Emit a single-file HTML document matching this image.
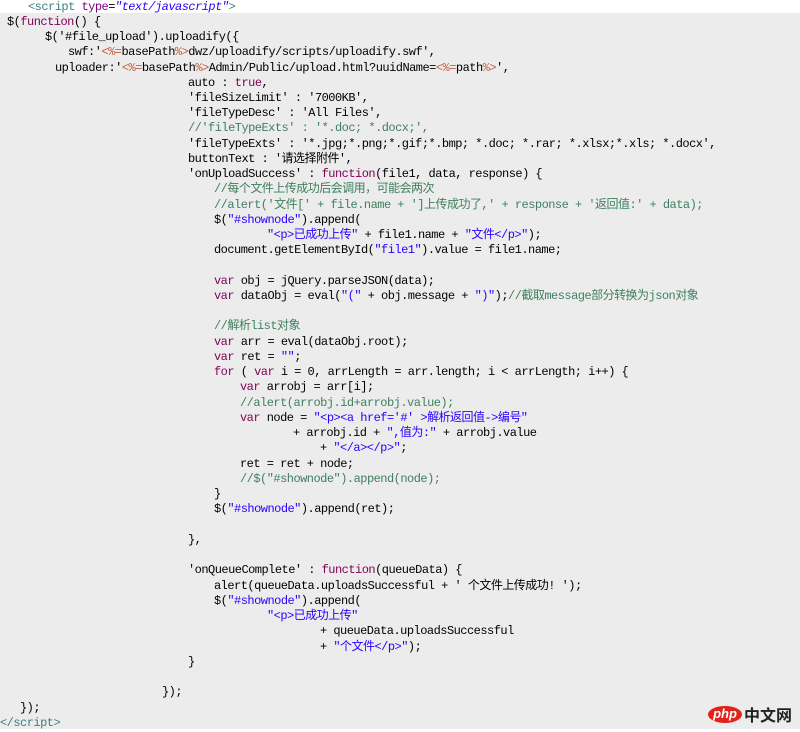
<!DOCTYPE html>
<html><head><meta charset="utf-8"><style>
body{margin:0;width:800px;height:732px;background:#fff;position:relative;overflow:hidden;font-family:"Liberation Mono","Noto Sans CJK SC",monospace;font-size:12px;letter-spacing:-0.52px;color:#000}
.bg{position:absolute;left:0;top:13px;width:800px;height:716px;background:#ececec}
.l{position:absolute;white-space:pre;line-height:15px;height:15px;margin-top:1px}
.k{color:#7f0055}.s{color:#2a00ff}.c{color:#3f7f5f}.j{color:#bf5f3f}.t{color:#3f7f7f}.a{color:#7f007f}.v{color:#2a00ff;font-style:italic}
.logo{position:absolute;left:708px;top:706px;height:18px}
.pe{position:absolute;left:0;top:0;width:34px;height:17px;background:#e2231a;border-radius:50%;color:#fff;font:bold 13px "Liberation Sans",sans-serif;text-align:center;line-height:15px;font-style:italic;letter-spacing:0}
.zh{position:absolute;left:36px;top:-2px;font:bold 16px "Noto Sans CJK SC",sans-serif;color:#222;white-space:nowrap;line-height:20px;letter-spacing:0}
</style></head><body>
<div class="bg"></div>
<div class="l" style="left:28px;top:-1px"><span class="t">&lt;script</span> <span class="a">type</span>=<span class="v">"text/javascript"</span><span class="t">&gt;</span></div>
<div class="l" style="left:7px;top:14px">$(<span class="k">function</span>() {</div>
<div class="l" style="left:45px;top:29px">$('#file_upload').uploadify({</div>
<div class="l" style="left:68px;top:44px">swf:'<span class="j">&lt;%=</span>basePath<span class="j">%&gt;</span>dwz/uploadify/scripts/uploadify.swf',</div>
<div class="l" style="left:55px;top:60px">uploader:'<span class="j">&lt;%=</span>basePath<span class="j">%&gt;</span>Admin/Public/upload.html?uuidName=<span class="j">&lt;%=</span>path<span class="j">%&gt;</span>',</div>
<div class="l" style="left:188px;top:75px">auto : <span class="k">true</span>,</div>
<div class="l" style="left:188px;top:90px">'fileSizeLimit' : '7000KB',</div>
<div class="l" style="left:188px;top:105px">'fileTypeDesc' : 'All Files',</div>
<div class="l c" style="left:188px;top:120px">//'fileTypeExts' : '*.doc; *.docx;',</div>
<div class="l" style="left:188px;top:136px">'fileTypeExts' : '*.jpg;*.png;*.gif;*.bmp; *.doc; *.rar; *.xlsx;*.xls; *.docx',</div>
<div class="l" style="left:188px;top:151px">buttonText : '请选择附件',</div>
<div class="l" style="left:188px;top:166px">'onUploadSuccess' : <span class="k">function</span>(file1, data, response) {</div>
<div class="l c" style="left:214px;top:181px">//每个文件上传成功后会调用，可能会两次</div>
<div class="l c" style="left:214px;top:197px">//alert('文件[' + file.name + ']上传成功了,' + response + '返回值:' + data);</div>
<div class="l" style="left:214px;top:212px">$(<span class="s">"#shownode"</span>).append(</div>
<div class="l" style="left:267px;top:227px"><span class="s">"&lt;p&gt;已成功上传"</span> + file1.name + <span class="s">"文件&lt;/p&gt;"</span>);</div>
<div class="l" style="left:214px;top:242px">document.getElementById(<span class="s">"file1"</span>).value = file1.name;</div>
<div class="l" style="left:214px;top:273px"><span class="k">var</span> obj = jQuery.parseJSON(data);</div>
<div class="l" style="left:214px;top:288px"><span class="k">var</span> dataObj = eval(<span class="s">"("</span> + obj.message + <span class="s">")"</span>);<span class="c">//截取message部分转换为json对象</span></div>
<div class="l c" style="left:214px;top:318px">//解析list对象</div>
<div class="l" style="left:214px;top:334px"><span class="k">var</span> arr = eval(dataObj.root);</div>
<div class="l" style="left:214px;top:349px"><span class="k">var</span> ret = <span class="s">""</span>;</div>
<div class="l" style="left:214px;top:364px"><span class="k">for</span> ( <span class="k">var</span> i = 0, arrLength = arr.length; i &lt; arrLength; i++) {</div>
<div class="l" style="left:240px;top:379px"><span class="k">var</span> arrobj = arr[i];</div>
<div class="l c" style="left:240px;top:395px">//alert(arrobj.id+arrobj.value);</div>
<div class="l" style="left:240px;top:410px"><span class="k">var</span> node = <span class="s">"&lt;p&gt;&lt;a href='#' &gt;解析返回值-&gt;编号"</span></div>
<div class="l" style="left:293px;top:425px">+ arrobj.id + <span class="s">",值为:"</span> + arrobj.value</div>
<div class="l" style="left:320px;top:440px">+ <span class="s">"&lt;/a&gt;&lt;/p&gt;"</span>;</div>
<div class="l" style="left:240px;top:456px">ret = ret + node;</div>
<div class="l c" style="left:240px;top:471px">//$("#shownode").append(node);</div>
<div class="l" style="left:214px;top:486px">}</div>
<div class="l" style="left:214px;top:501px">$(<span class="s">"#shownode"</span>).append(ret);</div>
<div class="l" style="left:188px;top:532px">},</div>
<div class="l" style="left:188px;top:562px">'onQueueComplete' : <span class="k">function</span>(queueData) {</div>
<div class="l" style="left:214px;top:578px">alert(queueData.uploadsSuccessful + ' 个文件上传成功! ');</div>
<div class="l" style="left:214px;top:593px">$(<span class="s">"#shownode"</span>).append(</div>
<div class="l" style="left:267px;top:608px"><span class="s">"&lt;p&gt;已成功上传"</span></div>
<div class="l" style="left:320px;top:623px">+ queueData.uploadsSuccessful</div>
<div class="l" style="left:320px;top:639px">+ <span class="s">"个文件&lt;/p&gt;"</span>);</div>
<div class="l" style="left:188px;top:654px">}</div>
<div class="l" style="left:162px;top:684px">});</div>
<div class="l" style="left:20px;top:700px">});</div>
<div class="l t" style="left:0px;top:715px">&lt;/script&gt;</div>
<div class="logo"><div class="pe">php</div><div class="zh">中文网</div></div>
</body></html>
